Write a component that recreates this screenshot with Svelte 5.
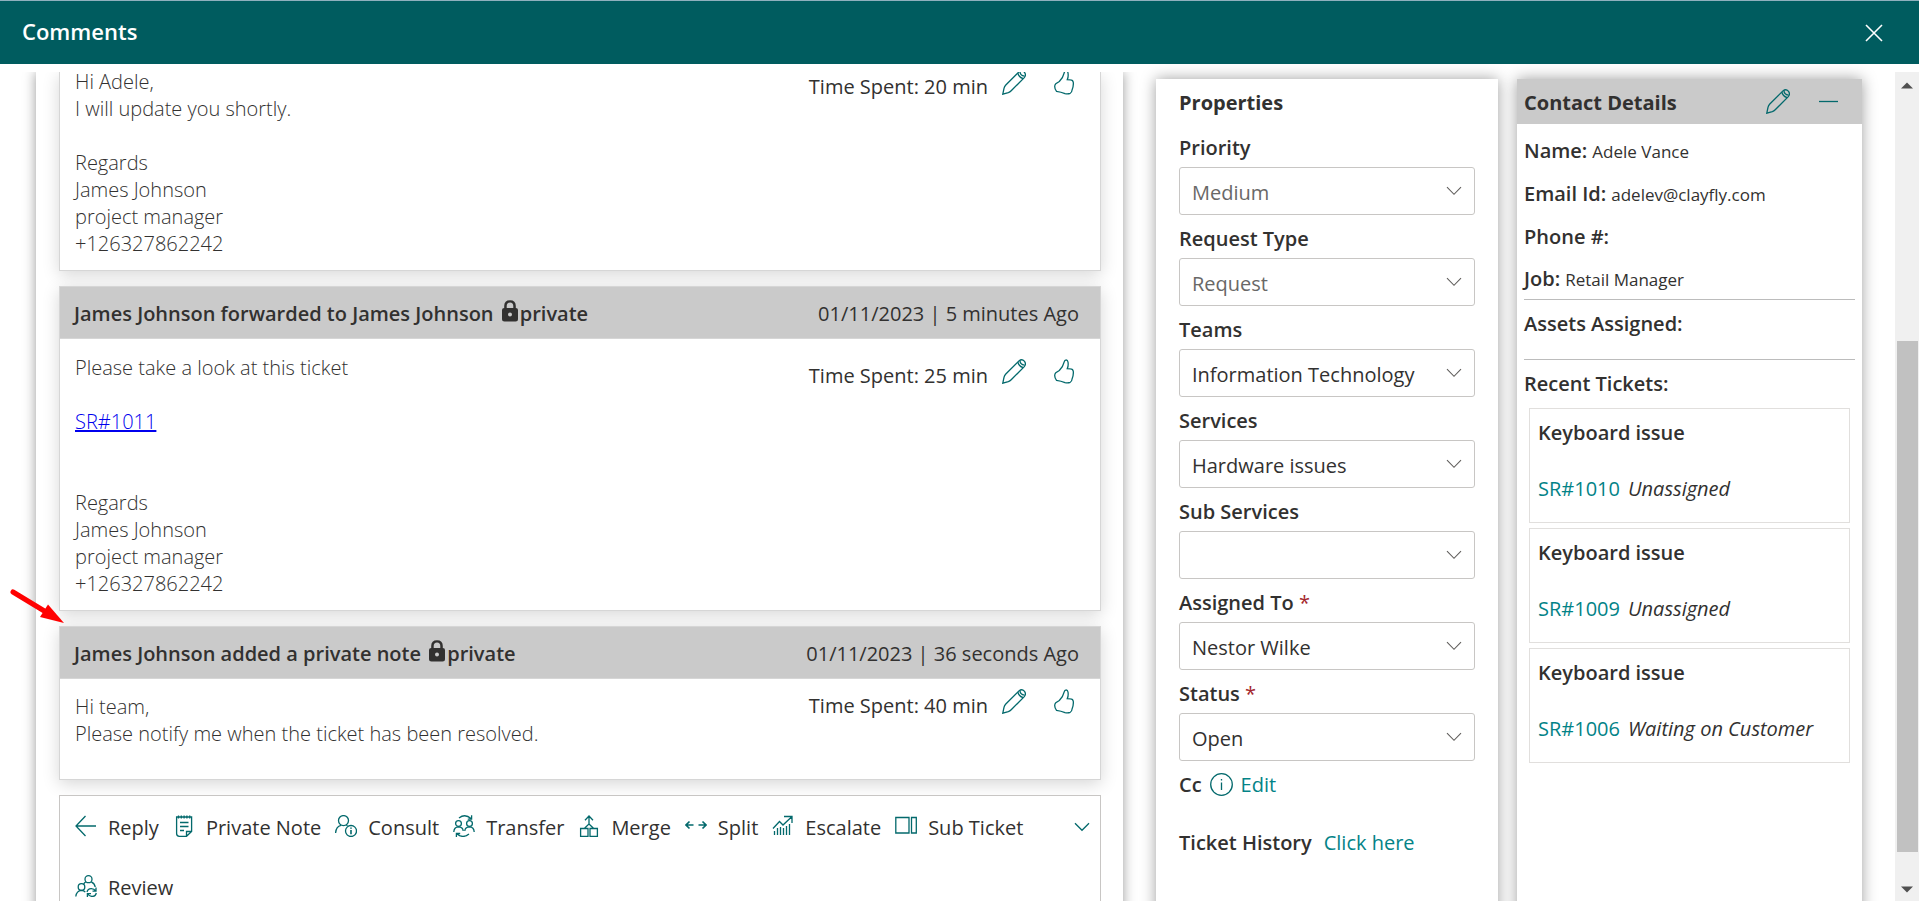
<script>
  const signature = ['Regards', 'James Johnson', 'project manager', '+126327862242'];

  const comments = [
    {
      lines: ['Hi Adele,', 'I will update you shortly.', '', ...signature],
      spent: '20 min',
      scrolled: true
    },
    {
      title: 'James Johnson forwarded to James Johnson',
      date: '01/11/2023 | 5 minutes Ago',
      lines: ['Please take a look at this ticket', '', 'SR#1011', '', '', ...signature],
      spent: '25 min'
    },
    {
      title: 'James Johnson added a private note',
      date: '01/11/2023 | 36 seconds Ago',
      lines: ['Hi team,', 'Please notify me when the ticket has been resolved.'],
      spent: '40 min',
      compact: true
    }
  ];

  const actions = [
    { icon: 'reply', label: 'Reply' },
    { icon: 'note', label: 'Private Note' },
    { icon: 'consult', label: 'Consult' },
    { icon: 'transfer', label: 'Transfer' },
    { icon: 'merge', label: 'Merge' },
    { icon: 'split', label: 'Split' },
    { icon: 'escalate', label: 'Escalate' },
    { icon: 'sub', label: 'Sub Ticket' },
    { icon: 'review', label: 'Review' }
  ];

  const fields = [
    { id: 'priority', label: 'Priority', value: 'Medium', muted: true },
    { id: 'type', label: 'Request Type', value: 'Request', muted: true },
    { id: 'teams', label: 'Teams', value: 'Information Technology' },
    { id: 'services', label: 'Services', value: 'Hardware issues' },
    { id: 'sub', label: 'Sub Services', value: '' },
    { id: 'assigned', label: 'Assigned To', value: 'Nestor Wilke', required: true },
    { id: 'status', label: 'Status', value: 'Open', required: true }
  ];

  const contact = [
    ['Name:', 'Adele Vance'],
    ['Email Id:', 'adelev@clayfly.com'],
    ['Phone #:', ''],
    ['Job:', 'Retail Manager']
  ];

  const tickets = [
    { title: 'Keyboard issue', id: 'SR#1010', state: 'Unassigned' },
    { title: 'Keyboard issue', id: 'SR#1009', state: 'Unassigned' },
    { title: 'Keyboard issue', id: 'SR#1006', state: 'Waiting on Customer' }
  ];
</script>

{#snippet pencil()}
  <svg class="line" width="24" height="25" viewBox="0 0 24 25" aria-hidden="true">
    <path d="M.8 24.2 2 18.3Q2.4 16.4 3.8 15L16.9 1.9Q20 -.4 22.3 2.1 24.6 4.9 22.3 7.6L9.2 20.8Q7.9 22.2 6.3 22.7Z" />
    <path d="M15.800 3Q16.700 7.300 21.200 8.600M18 1.500Q18 5.500 22.500 6.200" />
  </svg>
{/snippet}

{#snippet chevron()}
  <svg class="line" width="16" height="10" viewBox="0 0 16 10" aria-hidden="true"><path d="M1 1.2 8 8.3 15 1.2" /></svg>
{/snippet}

{#snippet icon(name)}
  <svg class="line" width="22" height="22" viewBox="0 0 22 22" aria-hidden="true">
    {#if name === 'reply'}
      <path d="M21 11H1M10.500 1 1 11 10.500 21" />
    {:else if name === 'note'}
      <path d="M5 2H3.6V18.500Q3.600 21.300 6.300 21.300H13.500L18.600 16.500V2H17M13.500 21V16.500H18.300M5.500 .4V3.600M8.300 .4V3.600M11.100 .4V3.600M13.900 .4V3.600M16.700 .4V3.600M6 2H16" />
      <path d="M7 7.500H15.500M7 11.500H15.500M7 15.500H11" />
    {:else if name === 'consult'}
      <circle cx="8.500" cy="5.600" r="5" />
      <path d="M.6 18Q1 11.500 6 10.300M11.200 9.800 12.500 10.800" />
      <circle cx="16" cy="16" r="5.500" />
      <path d="M16 15V19.200M16 12.500V13.800" stroke-width="1.600" />
    {:else if name === 'transfer'}
      <circle cx="5.500" cy="8.500" r="2.900" />
      <circle cx="16.500" cy="8.500" r="2.900" />
      <path d="M.8 17Q1 12 5.500 11.800 10 12 10.200 16M11.800 16Q12 12 16.500 11.800 21 12 21.200 17M6 3Q12-1.800 18 3.500M18.600 .3V4.200H14.800M16 19Q10 23.800 4 19M3.400 22V18.500H7.200" />
    {:else if name === 'merge'}
      <path d="M2.600 13.500H10V21.300H2.600ZM12 13.500H19.400V21.300H12ZM11 1V9L6.300 13.500M11 9 15.700 13.500M7 5.300 11 1 15 5.300" />
    {:else if name === 'split'}
      <path d="M1 10H8.500M4.500 6.500 1 10 4.500 13.500M13.500 10H21M17.500 6.500 21 10 17.500 13.500" stroke-width="1.600" />
    {:else if name === 'escalate'}
      <path d="M1 13.500 7.500 6.500 11 10 19.500 2M12 1.500H20V8M2.500 16V20M5.500 13V20M8.500 12V20M11.500 13V20M14.500 11V20M17.500 9V20" stroke-width="1.300" />
    {:else if name === 'sub'}
      <path d="M.8 2.500H14V18H.8ZM16.500 2.500H21.300V18H16.500Z" />
    {:else}
      <circle cx="13.500" cy="4.200" r="3.500" />
      <circle cx="6.500" cy="12" r="3.300" />
      <path d="M10.800 6.800Q9.200 8 8.800 9M16.300 6.800Q19.800 8.500 20.200 12M.8 21.500Q1.500 15.800 6.500 15.400 9 15.500 10.300 17.200M12 17Q12.800 13.500 16.300 13.600 19 13.700 20.800 16M21 12.600V16.200H17.500M21.300 18Q20.500 21.500 17 21.400 14.300 21.300 12.700 19M12.400 22.300V18.700H16" />
    {/if}
  </svg>
{/snippet}

<div class="app">
  <header class="bar">
    <h1>Comments</h1>
    <button class="close" aria-label="Close">
      <svg width="18" height="18" viewBox="0 0 18 18" aria-hidden="true"><path d="M1 1 17 17M17 1 1 17" /></svg>
    </button>
  </header>

  <div class="page">
    <div class="columns">
      <main class="thread">
        {#each comments as comment}
          <article class="comment" class:scrolled={comment.scrolled} class:compact={comment.compact}>
            {#if comment.title}
              <div class="comment-head">
                <h2>
                  {comment.title}
                  <span class="private"><svg width="16" height="22" viewBox="0 0 16 22" aria-hidden="true">
                      <path d="M2.200 8V6Q2.200 .3 8 .3 13.800 .3 13.800 6V8Q16 8 16 10V19Q16 21.500 13.500 21.500H2.500Q0 21.500 0 19V10Q0 8 2.200 8ZM4.700 8H11.300V6Q11.300 2.500 8 2.500 4.700 2.500 4.700 6ZM8 12.500A2 2 0 1 0 8 16.500 2 2 0 1 0 8 12.500Z" fill-rule="evenodd" />
                    </svg>private</span>
                </h2>
                <time>{comment.date}</time>
              </div>
            {/if}
            <div class="comment-body">
              <div class="message">
                {#each comment.lines as line}
                  <p>{#if line.startsWith('SR#')}<a href="#ticket">{line}</a>{:else}{line}{/if}</p>
                {/each}
              </div>
              <div class="tools">
                <span>Time Spent: {comment.spent}</span>
                <button aria-label="Edit time">{@render pencil()}</button>
                <button class="like" aria-label="Like">
                  <svg class="line" width="20" height="25" viewBox="0 0 20 25" aria-hidden="true">
                    <path d="M12.200 .8Q10.600 .9 10.200 2.900 9.300 7.400 5.300 11.500L1.800 13.800Q.7 14.800 .7 16.500 .8 19.500 2.500 21.300 7 21.900 11 23.600 14 24.200 16.200 23.300 17.900 22.400 18.200 19.500 19.600 16 19.300 12.500 18.900 9.900 16.500 9.900L13.300 9.600Q14.600 6.500 14 3 13.600 .8 12.200 .8Z" />
                  </svg>
                </button>
              </div>
            </div>
          </article>
        {/each}

        <section class="actions">
          <div class="action-list">
            {#each actions as action}
              <button>{@render icon(action.icon)}<span>{action.label}</span></button>
            {/each}
          </div>
          <button class="more" aria-label="More actions">{@render chevron()}</button>
        </section>
      </main>

      <section class="properties">
        <h2>Properties</h2>
        {#each fields as field}
          <div class="field">
            <label for={field.id}>{field.label}{#if field.required}<span class="required">{' *'}</span>{/if}</label>
            <div class="select" class:muted={field.muted}>
              <select id={field.id}><option>{field.value}</option></select>
              {@render chevron()}
            </div>
          </div>
        {/each}
        <div class="cc">
          <strong>Cc</strong>
          <svg class="line" width="23" height="23" viewBox="0 0 23 23" aria-hidden="true">
            <circle cx="11.500" cy="11.500" r="10.800" /><path d="M11.500 9.500V17M11.500 6V7.600" />
          </svg>
          <a href="#cc">Edit</a>
        </div>
        <div class="history"><strong>Ticket History</strong><a href="#history">Click here</a></div>
      </section>

      <aside class="contact">
        <div class="contact-head">
          <h2>Contact Details</h2>
          <button aria-label="Edit contact">{@render pencil()}</button>
          <button aria-label="Collapse"><svg class="line" width="19" height="24" viewBox="0 0 19 24" aria-hidden="true"><path d="M0 11.500H19" /></svg></button>
        </div>
        <div class="contact-body">
          <dl>
            {#each contact as [name, value]}
              <div><dt>{name}</dt><dd>{value}</dd></div>
            {/each}
          </dl>
          <h3 class="assets">Assets Assigned:</h3>
          <h3>Recent Tickets:</h3>
          <ul>
            {#each tickets as ticket}
              <li>
                <strong>{ticket.title}</strong>
                <p><a href="#ticket">{ticket.id}</a><em>{ticket.state}</em></p>
              </li>
            {/each}
          </ul>
        </div>
      </aside>
    </div>

    <div class="scrollbar" aria-hidden="true">
      <svg width="12" height="7" viewBox="0 0 12 7"><path d="M0 6.500 6 .5 12 6.500Z" /></svg>
      <div class="track"><div class="thumb"></div></div>
      <svg width="12" height="7" viewBox="0 0 12 7"><path d="M0 .5 6 6.500 12 .5Z" /></svg>
    </div>
  </div>

  <svg class="pointer" width="54" height="36" viewBox="0 0 54 36" aria-hidden="true">
    <path d="M3 4 36 24" stroke="#f00" stroke-width="5" stroke-linecap="round" />
    <path d="M54 35 38 16.500 30 29Z" fill="#f00" />
  </svg>
</div>

<style>
  :global(body) {
    margin: 0;
    background: #fff;
  }

  .app {
    position: relative;
    display: flex;
    flex-direction: column;
    height: 100vh;
    overflow: hidden;
    box-sizing: border-box;
    border-top: 1px solid #8fb0bd;
    background: #fff;
    color: #323130;
    font-family: 'Open Sans', 'Noto Sans', sans-serif;
    font-size: 20px;
    line-height: 27px;
  }

  .app :global(*) {
    box-sizing: border-box;
  }

  h1, h2, h3, p, dl, dd, ul {
    margin: 0;
    padding: 0;
    font-size: inherit;
  }

  h1, h2, h3, strong, dt, label {
    font-weight: 600;
  }

  button {
    display: flex;
    align-items: center;
    padding: 0;
    border: 0;
    background: none;
    color: inherit;
    font: inherit;
  }

  a {
    color: #038387;
    text-decoration: none;
  }

  .line {
    flex: none;
    fill: none;
    stroke: #03696c;
    stroke-width: 1.3;
  }

  .bar {
    position: relative;
    z-index: 1;
    display: flex;
    flex: none;
    align-items: center;
    justify-content: space-between;
    height: 63px;
    padding: 0 36px 0 22px;
    background: #005c5f;
    color: #fff;
    font-size: 22px;
  }

  .bar h1 {
    padding-bottom: 2px;
  }

  .close path {
    stroke: #fff;
    stroke-width: 1.6;
  }

  .page {
    display: flex;
    flex: 1;
    min-height: 0;
    padding-top: 8px;
  }

  .columns {
    display: grid;
    flex: 1;
    grid-template-columns: 1087fr 33fr 342fr 19fr 345fr;
    min-width: 0;
    padding: 0 33px 0 36px;
  }

  .thread {
    grid-column: 1;
    display: flex;
    flex-direction: column;
    gap: 15px;
    padding: 0 22px 0 23px;
    box-shadow: 0 0 12px rgba(0, 0, 0, 0.4);
    clip-path: inset(0 -16px 0 -16px);
  }

  .comment {
    flex: none;
    border: 1px solid #d6d6d6;
    box-shadow: 0 4px 16px rgba(0, 0, 0, 0.16);
    background: #fff;
  }

  .comment-head {
    display: flex;
    align-items: center;
    justify-content: space-between;
    height: 52px;
    padding: 1px 21px 0 14px;
    border-bottom: 1px solid #d6d6d6;
    background: #cacaca;
  }

  .private {
    white-space: nowrap;
  }

  .private svg {
    margin: 0 2px 0 3px;
    vertical-align: -1px;
    fill: #323130;
  }

  .comment-body {
    display: flex;
    justify-content: space-between;
    padding: 15px 26px 13px 15px;
  }

  .message {
    font-weight: 300;
  }

  .message p {
    min-height: 27px;
  }

  .message a {
    color: #00e;
    text-decoration: underline;
  }

  .tools {
    display: flex;
    align-items: flex-start;
    gap: 14px;
    padding-top: 5px;
  }

  .tools span {
    padding-top: 3px;
  }

  .like {
    margin-left: 14px;
  }

  .scrolled {
    border-top: 0;
  }

  .scrolled .comment-body {
    margin-top: -4px;
    padding-top: 0;
  }

  .scrolled .tools {
    padding-top: 2px;
  }

  .compact .comment-body {
    padding-top: 10px;
    padding-bottom: 32px;
  }

  .compact .tools {
    padding-top: 0;
  }

  .compact .message {
    padding-top: 4px;
  }

  .actions {
    display: flex;
    flex: 1 0 150px;
    align-items: flex-start;
    justify-content: space-between;
    padding: 0 10px 0 15px;
    border: 1px solid #c8c6c4;
    border-bottom: 0;
    background: #fff;
  }

  .action-list {
    display: flex;
    flex-wrap: wrap;
    column-gap: 14px;
  }

  .action-list button {
    gap: 11px;
    height: 60px;
  }

  .action-list span {
    padding-top: 2px;
  }

  .more {
    height: 61px;
  }

  .properties,
  .contact {
    min-height: 0;
    margin-top: 7px;
    background: #fff;
    box-shadow: 0 0 14px rgba(0, 0, 0, 0.38);
  }

  .properties {
    grid-column: 3;
    padding: 10px 23px;
  }

  .properties h2 {
    margin-bottom: 21px;
    font-weight: 700;
  }

  .field {
    margin-bottom: 13px;
  }

  .field label {
    display: block;
    margin-bottom: 9px;
    line-height: 21px;
  }

  .required {
    color: #a4262c;
    font-weight: 400;
  }

  .select {
    position: relative;
  }

  .select select {
    display: block;
    width: 100%;
    height: 48px;
    padding: 2px 40px 0 12px;
    border: 1px solid #c8c6c4;
    border-radius: 3px;
    appearance: none;
    background: #fff;
    color: #323130;
    font: inherit;
  }

  .select.muted select {
    color: #696867;
  }

  .select :global(svg) {
    position: absolute;
    top: 19px;
    right: 13px;
    stroke: #605e5c;
    stroke-width: 1.1;
  }

  .cc {
    display: flex;
    align-items: center;
    gap: 8px;
    margin-top: -3px;
  }

  .history {
    display: flex;
    gap: 12px;
    margin-top: 31px;
  }

  .contact {
    grid-column: 5;
  }

  .contact-head {
    display: flex;
    align-items: center;
    gap: 29px;
    height: 45px;
    padding: 0 24px 0 7px;
    background: #cacaca;
  }

  .contact-head h2 {
    flex: 1;
    padding-top: 2px;
    font-weight: 700;
  }

  .contact-body {
    padding: 5px 7px;
  }

  dl div {
    display: flex;
    align-items: center;
    gap: 5px;
    height: 43px;
  }

  dl div:last-child {
    height: 42px;
    border-bottom: 1px solid #bcbcbc;
  }

  dd {
    padding-top: 1px;
    font-size: 17px;
  }

  h3 {
    padding-top: 10px;
  }

  .assets {
    height: 60px;
    border-bottom: 1px solid #bcbcbc;
  }

  ul {
    display: flex;
    flex-direction: column;
    gap: 5px;
    margin: 11px 5px 0;
    list-style: none;
  }

  li {
    height: 115px;
    padding: 10px 8px;
    border: 1px solid #e1dfdd;
  }

  li p {
    display: flex;
    gap: 8px;
    margin-top: 29px;
  }

  .scrollbar {
    display: flex;
    flex: none;
    flex-direction: column;
    align-items: center;
    width: 24px;
    padding: 10px 0 8px;
    background: #f0f0f0;
    fill: #505050;
  }

  .scrollbar svg {
    flex: none;
  }

  .track {
    display: flex;
    flex: 1;
    flex-direction: column;
    justify-content: flex-end;
    width: 21px;
    padding-bottom: 34px;
  }

  .thumb {
    height: 67%;
    background: #c1c1c1;
  }

  .pointer {
    position: absolute;
    top: 587px;
    left: 10px;
    fill: none;
  }
</style>
